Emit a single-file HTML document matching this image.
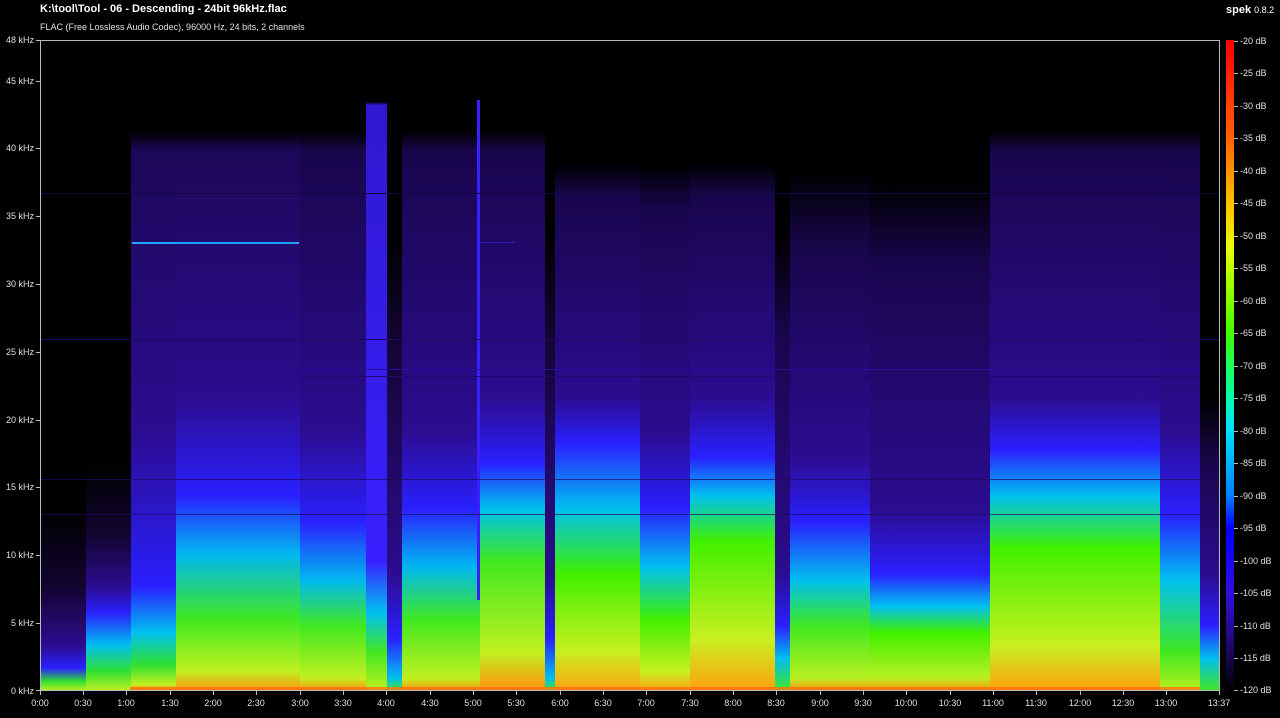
<!DOCTYPE html>
<html><head><meta charset="utf-8"><style>
body{margin:0;background:#000;width:1280px;height:718px;overflow:hidden;position:relative;font-family:"Liberation Sans",sans-serif;color:#e0e0e0}
.t{position:absolute;font-size:10px;white-space:nowrap}
.fl{position:absolute;right:1246px;font-size:9px;line-height:10px}
.db{position:absolute;left:1240px;font-size:9px;line-height:10px}
.tm{position:absolute;top:698px;font-size:9px;width:40px;margin-left:-20px;text-align:center}
</style></head><body>
<div class="t" style="left:40px;top:3px;font-weight:bold;font-size:11px;color:#fff">K:\tool\Tool - 06 - Descending - 24bit 96kHz.flac</div>
<div class="t" style="left:40px;top:22px;font-size:9px">FLAC (Free Lossless Audio Codec), 96000 Hz, 24 bits, 2 channels</div>
<div class="t" style="left:1226px;top:4px;font-size:11px;font-weight:bold;color:#fff">spek <span style="font-weight:normal;font-size:9px">0.8.2</span></div>
<svg width="1280" height="718" style="position:absolute;left:0;top:0">
<defs>
<linearGradient id="g1" x1="0" y1="0" x2="0" y2="1"><stop offset=".72" stop-color="#000"/><stop offset=".84" stop-color="#120530"/><stop offset=".93" stop-color="#2c0c90"/><stop offset=".965" stop-color="#2a20ff"/><stop offset=".985" stop-color="#30e030"/><stop offset="1" stop-color="#c0f020"/></linearGradient>
<linearGradient id="g2" x1="0" y1="0" x2="0" y2="1"><stop offset=".65" stop-color="#000"/><stop offset=".76" stop-color="#120530"/><stop offset=".84" stop-color="#2c0c90"/><stop offset=".88" stop-color="#2a20ff"/><stop offset=".93" stop-color="#00c0f0"/><stop offset=".97" stop-color="#30e030"/><stop offset="1" stop-color="#c0f020"/></linearGradient>
<linearGradient id="g3" x1="0" y1="0" x2="0" y2="1"><stop offset=".14" stop-color="#000"/><stop offset=".17" stop-color="#1c0858"/><stop offset=".6" stop-color="#2c0c90"/><stop offset=".84" stop-color="#2a20ff"/><stop offset=".91" stop-color="#00c0f0"/><stop offset=".96" stop-color="#30e030"/><stop offset=".99" stop-color="#c0f020"/><stop offset="1" stop-color="#ff9010"/></linearGradient>
<linearGradient id="g4" x1="0" y1="0" x2="0" y2="1"><stop offset=".14" stop-color="#000"/><stop offset=".17" stop-color="#1c0858"/><stop offset=".55" stop-color="#2c0c90"/><stop offset=".7" stop-color="#2a20ff"/><stop offset=".79" stop-color="#00b8f0"/><stop offset=".89" stop-color="#40e820"/><stop offset=".97" stop-color="#c0f020"/><stop offset="1" stop-color="#ff9010"/></linearGradient>
<linearGradient id="g5" x1="0" y1="0" x2="0" y2="1"><stop offset=".14" stop-color="#000"/><stop offset=".17" stop-color="#18064c"/><stop offset=".6" stop-color="#2c0c90"/><stop offset=".74" stop-color="#2a20ff"/><stop offset=".83" stop-color="#00b8f0"/><stop offset=".9" stop-color="#40e820"/><stop offset=".98" stop-color="#c0f020"/><stop offset="1" stop-color="#ff9010"/></linearGradient>
<linearGradient id="g6" x1="0" y1="0" x2="0" y2="1"><stop offset=".095" stop-color="#000"/><stop offset=".10" stop-color="#3018d0"/><stop offset=".8" stop-color="#3a20ff"/><stop offset=".88" stop-color="#00c0f0"/><stop offset=".94" stop-color="#40e820"/><stop offset="1" stop-color="#c0f020"/></linearGradient>
<linearGradient id="g7" x1="0" y1="0" x2="0" y2="1"><stop offset=".14" stop-color="#000"/><stop offset=".17" stop-color="#18064c"/><stop offset=".6" stop-color="#2c0c90"/><stop offset=".72" stop-color="#2a20ff"/><stop offset=".81" stop-color="#00b8f0"/><stop offset=".89" stop-color="#40e820"/><stop offset=".98" stop-color="#c0f020"/><stop offset="1" stop-color="#ff9010"/></linearGradient>
<linearGradient id="g8" x1="0" y1="0" x2="0" y2="1"><stop offset=".14" stop-color="#000"/><stop offset=".17" stop-color="#18064c"/><stop offset=".55" stop-color="#2c0c90"/><stop offset=".65" stop-color="#2a20ff"/><stop offset=".72" stop-color="#00c0f0"/><stop offset=".8" stop-color="#40e820"/><stop offset=".94" stop-color="#c0f020"/><stop offset="1" stop-color="#ff9010"/></linearGradient>
<linearGradient id="g9" x1="0" y1="0" x2="0" y2="1"><stop offset=".3" stop-color="#000"/><stop offset=".45" stop-color="#120530"/><stop offset=".82" stop-color="#2c0c90"/><stop offset=".92" stop-color="#2a20ff"/><stop offset=".98" stop-color="#00c0f0"/><stop offset="1" stop-color="#40e820"/></linearGradient>
<linearGradient id="g10" x1="0" y1="0" x2="0" y2="1"><stop offset=".19" stop-color="#000"/><stop offset=".24" stop-color="#18064c"/><stop offset=".55" stop-color="#2c0c90"/><stop offset=".62" stop-color="#2a20ff"/><stop offset=".72" stop-color="#00c0f0"/><stop offset=".82" stop-color="#40f000"/><stop offset=".94" stop-color="#c8f020"/><stop offset="1" stop-color="#ffa010"/></linearGradient>
<linearGradient id="g11" x1="0" y1="0" x2="0" y2="1"><stop offset=".19" stop-color="#000"/><stop offset=".26" stop-color="#18064c"/><stop offset=".6" stop-color="#2c0c90"/><stop offset=".72" stop-color="#2a20ff"/><stop offset=".81" stop-color="#00c0f0"/><stop offset=".89" stop-color="#40f000"/><stop offset=".97" stop-color="#c8f020"/><stop offset="1" stop-color="#ffa010"/></linearGradient>
<linearGradient id="g12" x1="0" y1="0" x2="0" y2="1"><stop offset=".19" stop-color="#000"/><stop offset=".24" stop-color="#18064c"/><stop offset=".55" stop-color="#2c0c90"/><stop offset=".64" stop-color="#2a20ff"/><stop offset=".7" stop-color="#00c0f0"/><stop offset=".77" stop-color="#40f000"/><stop offset=".92" stop-color="#c8f020"/><stop offset="1" stop-color="#ffa010"/></linearGradient>
<linearGradient id="g13" x1="0" y1="0" x2="0" y2="1"><stop offset=".3" stop-color="#000"/><stop offset=".45" stop-color="#18064c"/><stop offset=".82" stop-color="#2c0c90"/><stop offset=".9" stop-color="#2a20ff"/><stop offset=".95" stop-color="#00c0f0"/><stop offset="1" stop-color="#40e820"/></linearGradient>
<linearGradient id="g14" x1="0" y1="0" x2="0" y2="1"><stop offset=".2" stop-color="#000"/><stop offset=".32" stop-color="#18064c"/><stop offset=".64" stop-color="#2c0c90"/><stop offset=".74" stop-color="#2a20ff"/><stop offset=".83" stop-color="#00c0f0"/><stop offset=".9" stop-color="#40e820"/><stop offset=".98" stop-color="#b8f020"/><stop offset="1" stop-color="#ff9010"/></linearGradient>
<linearGradient id="g15" x1="0" y1="0" x2="0" y2="1"><stop offset=".22" stop-color="#000"/><stop offset=".34" stop-color="#18064c"/><stop offset=".72" stop-color="#2c0c90"/><stop offset=".82" stop-color="#2a20ff"/><stop offset=".87" stop-color="#00c0f0"/><stop offset=".91" stop-color="#40f000"/><stop offset=".98" stop-color="#b8f020"/><stop offset="1" stop-color="#ff9010"/></linearGradient>
<linearGradient id="g16" x1="0" y1="0" x2="0" y2="1"><stop offset=".14" stop-color="#000"/><stop offset=".17" stop-color="#18064c"/><stop offset=".55" stop-color="#2c0c90"/><stop offset=".63" stop-color="#2a20ff"/><stop offset=".7" stop-color="#00c0f0"/><stop offset=".78" stop-color="#40f000"/><stop offset=".93" stop-color="#c8f020"/><stop offset="1" stop-color="#ffa010"/></linearGradient>
<linearGradient id="g17" x1="0" y1="0" x2="0" y2="1"><stop offset=".14" stop-color="#000"/><stop offset=".17" stop-color="#18064c"/><stop offset=".6" stop-color="#2c0c90"/><stop offset=".73" stop-color="#2a20ff"/><stop offset=".83" stop-color="#00c0f0"/><stop offset=".94" stop-color="#40e820"/><stop offset="1" stop-color="#b8f020"/></linearGradient>
<linearGradient id="g18" x1="0" y1="0" x2="0" y2="1"><stop offset=".55" stop-color="#000"/><stop offset=".65" stop-color="#18064c"/><stop offset=".82" stop-color="#2c0c90"/><stop offset=".9" stop-color="#2a20ff"/><stop offset=".95" stop-color="#00c0f0"/><stop offset="1" stop-color="#40e820"/></linearGradient>
<linearGradient id="cb" x1="0" y1="0" x2="0" y2="1"><stop offset="0" stop-color="#ff0000"/><stop offset=".15" stop-color="#ff6000"/><stop offset=".25" stop-color="#ffc000"/><stop offset=".32" stop-color="#e8ff00"/><stop offset=".45" stop-color="#40ff00"/><stop offset=".55" stop-color="#00ffb0"/><stop offset=".6" stop-color="#00e0ff"/><stop offset=".7" stop-color="#0080ff"/><stop offset=".75" stop-color="#0000ff"/><stop offset=".85" stop-color="#3010e0"/><stop offset=".92" stop-color="#24087a"/><stop offset="1" stop-color="#000"/></linearGradient>
</defs>
<g>
<rect x="40" y="40" width="46" height="651" fill="url(#g1)"/>
<rect x="86" y="40" width="45" height="651" fill="url(#g2)"/>
<rect x="131" y="40" width="45" height="651" fill="url(#g3)"/>
<rect x="176" y="40" width="124" height="651" fill="url(#g4)"/>
<rect x="300" y="40" width="66" height="651" fill="url(#g5)"/>
<rect x="366" y="40" width="21" height="651" fill="url(#g6)"/>
<rect x="387" y="40" width="15" height="651" fill="url(#g9)"/>
<rect x="402" y="40" width="78" height="651" fill="url(#g7)"/>
<rect x="480" y="40" width="65" height="651" fill="url(#g8)"/>
<rect x="545" y="40" width="10" height="651" fill="url(#g9)"/>
<rect x="555" y="40" width="85" height="651" fill="url(#g10)"/>
<rect x="640" y="40" width="50" height="651" fill="url(#g11)"/>
<rect x="690" y="40" width="85" height="651" fill="url(#g12)"/>
<rect x="775" y="40" width="15" height="651" fill="url(#g13)"/>
<rect x="790" y="40" width="80" height="651" fill="url(#g14)"/>
<rect x="870" y="40" width="120" height="651" fill="url(#g15)"/>
<rect x="990" y="40" width="170" height="651" fill="url(#g16)"/>
<rect x="1160" y="40" width="40" height="651" fill="url(#g17)"/>
<rect x="1200" y="40" width="20" height="651" fill="url(#g18)"/>
<rect x="477" y="100" width="3" height="500" fill="#3a20ff"/>
<rect x="132" y="242" width="167" height="2" fill="#20a0ff"/>
<rect x="480" y="242" width="35" height="1" fill="#3020c0"/>
<rect x="40" y="339" width="1180" height="1" fill="#200860"/>
<rect x="300" y="369" width="900" height="1" fill="#2a0ca0"/>
<rect x="300" y="376" width="900" height="1" fill="#200870"/>
<rect x="40" y="479" width="1180" height="1" fill="#200860" opacity=".7"/>
<rect x="40" y="514" width="1180" height="1" fill="#200860" opacity=".7"/>
<rect x="40" y="193" width="1180" height="1" fill="#140640"/>
<rect x="130" y="687" width="1070" height="3" fill="#ff7010" opacity=".8"/>
</g>
<rect x="40.5" y="40.5" width="1179" height="650" fill="none" stroke="#bbb"/>
<rect x="1226" y="40" width="8" height="651" fill="url(#cb)"/>
<g stroke="#bbb">
<path d="M36 40.5h4M36 81.5h4M36 148.5h4M36 216.5h4M36 284.5h4M36 352.5h4M36 420.5h4M36 487.5h4M36 555.5h4M36 623.5h4M36 690.5h4"/>
<path d="M40.5 691v4M83.5 691v4M126.5 691v4M170.5 691v4M213.5 691v4M256.5 691v4M300.5 691v4M343.5 691v4M386.5 691v4M430.5 691v4M473.5 691v4M516.5 691v4M560.5 691v4M603.5 691v4M646.5 691v4M690.5 691v4M733.5 691v4M776.5 691v4M820.5 691v4M863.5 691v4M906.5 691v4M950.5 691v4M993.5 691v4M1036.5 691v4M1080.5 691v4M1123.5 691v4M1166.5 691v4M1219.5 691v4"/>
<path d="M1234 41.5h4M1234 73.5h4M1234 106.5h4M1234 138.5h4M1234 171.5h4M1234 203.5h4M1234 236.5h4M1234 268.5h4M1234 301.5h4M1234 333.5h4M1234 366.5h4M1234 398.5h4M1234 431.5h4M1234 463.5h4M1234 496.5h4M1234 528.5h4M1234 561.5h4M1234 593.5h4M1234 626.5h4M1234 658.5h4M1234 690.5h4"/>
</g>
</svg>
<div class="fl" style="top:35px">48 kHz</div><div class="fl" style="top:76px">45 kHz</div><div class="fl" style="top:143px">40 kHz</div><div class="fl" style="top:211px">35 kHz</div><div class="fl" style="top:279px">30 kHz</div><div class="fl" style="top:347px">25 kHz</div><div class="fl" style="top:415px">20 kHz</div><div class="fl" style="top:482px">15 kHz</div><div class="fl" style="top:550px">10 kHz</div><div class="fl" style="top:618px">5 kHz</div><div class="fl" style="top:686px">0 kHz</div>
<div class="db" style="top:36px">-20 dB</div><div class="db" style="top:68px">-25 dB</div><div class="db" style="top:101px">-30 dB</div><div class="db" style="top:133px">-35 dB</div><div class="db" style="top:166px">-40 dB</div><div class="db" style="top:198px">-45 dB</div><div class="db" style="top:231px">-50 dB</div><div class="db" style="top:263px">-55 dB</div><div class="db" style="top:296px">-60 dB</div><div class="db" style="top:328px">-65 dB</div><div class="db" style="top:361px">-70 dB</div><div class="db" style="top:393px">-75 dB</div><div class="db" style="top:426px">-80 dB</div><div class="db" style="top:458px">-85 dB</div><div class="db" style="top:491px">-90 dB</div><div class="db" style="top:523px">-95 dB</div><div class="db" style="top:556px">-100 dB</div><div class="db" style="top:588px">-105 dB</div><div class="db" style="top:621px">-110 dB</div><div class="db" style="top:653px">-115 dB</div><div class="db" style="top:685px">-120 dB</div>
<div class="tm" style="left:40px">0:00</div><div class="tm" style="left:83px">0:30</div><div class="tm" style="left:126px">1:00</div><div class="tm" style="left:170px">1:30</div><div class="tm" style="left:213px">2:00</div><div class="tm" style="left:256px">2:30</div><div class="tm" style="left:300px">3:00</div><div class="tm" style="left:343px">3:30</div><div class="tm" style="left:386px">4:00</div><div class="tm" style="left:430px">4:30</div><div class="tm" style="left:473px">5:00</div><div class="tm" style="left:516px">5:30</div><div class="tm" style="left:560px">6:00</div><div class="tm" style="left:603px">6:30</div><div class="tm" style="left:646px">7:00</div><div class="tm" style="left:690px">7:30</div><div class="tm" style="left:733px">8:00</div><div class="tm" style="left:776px">8:30</div><div class="tm" style="left:820px">9:00</div><div class="tm" style="left:863px">9:30</div><div class="tm" style="left:906px">10:00</div><div class="tm" style="left:950px">10:30</div><div class="tm" style="left:993px">11:00</div><div class="tm" style="left:1036px">11:30</div><div class="tm" style="left:1080px">12:00</div><div class="tm" style="left:1123px">12:30</div><div class="tm" style="left:1166px">13:00</div><div class="tm" style="left:1219px">13:37</div>
</body></html>
